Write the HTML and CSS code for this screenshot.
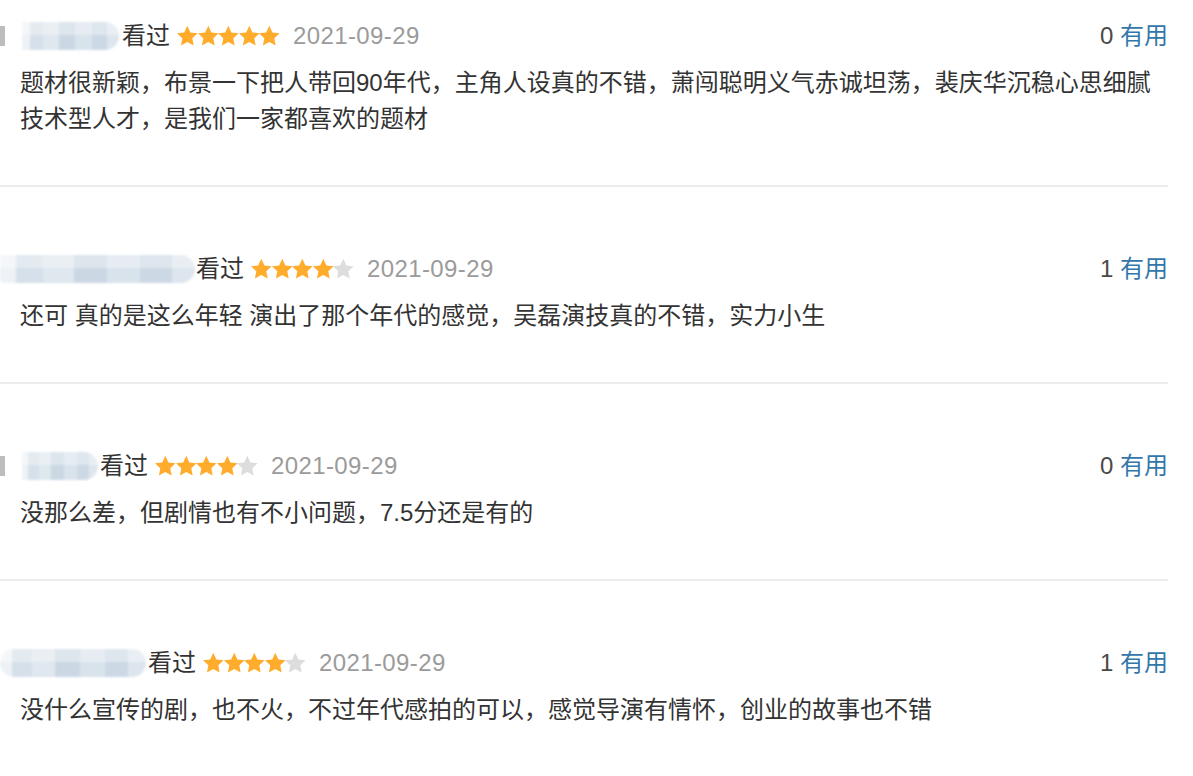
FILE: index.html
```html
<!DOCTYPE html>
<html lang="zh-CN">
<head>
<meta charset="utf-8">
<title>短评</title>
<link rel="stylesheet" href="styles.css">
</head>
<body>
<svg class="defs" width="0" height="0" aria-hidden="true">
  <symbol id="star" viewBox="0 0 20 20" overflow="visible">
    <polygon points="10,-0.2 13.1,6.4 20.3,7.3 15,12.3 16.35,19.45 10,15.95 3.65,19.45 5,12.3 -0.3,7.3 6.9,6.4"/>
  </symbol>
</svg>
<div class="comments">
  <div class="item">
    <div class="head">
      <div class="info">
        <span class="avatar-edge"></span>
        <span class="name-mask w1"></span>
        <span class="seen">看过</span>
        <span class="stars">
          <svg class="star on"><use href="#star"/></svg><svg class="star on"><use href="#star"/></svg><svg class="star on"><use href="#star"/></svg><svg class="star on"><use href="#star"/></svg><svg class="star on"><use href="#star"/></svg>
        </span>
        <span class="date">2021-09-29</span>
      </div>
      <div class="votes"><span class="count">0</span> <a class="useful">有用</a></div>
    </div>
    <p class="text">题材很新颖，布景一下把人带回90年代，主角人设真的不错，萧闯聪明义气赤诚坦荡，裴庆华沉稳心思细腻技术型人才，是我们一家都喜欢的题材</p>
  </div>

  <div class="item">
    <div class="head">
      <div class="info">
        <span class="name-mask w2"></span>
        <span class="seen">看过</span>
        <span class="stars">
          <svg class="star on"><use href="#star"/></svg><svg class="star on"><use href="#star"/></svg><svg class="star on"><use href="#star"/></svg><svg class="star on"><use href="#star"/></svg><svg class="star off"><use href="#star"/></svg>
        </span>
        <span class="date">2021-09-29</span>
      </div>
      <div class="votes"><span class="count">1</span> <a class="useful">有用</a></div>
    </div>
    <p class="text">还可 真的是这么年轻 演出了那个年代的感觉，吴磊演技真的不错，实力小生</p>
  </div>

  <div class="item">
    <div class="head">
      <div class="info">
        <span class="avatar-edge"></span>
        <span class="name-mask w3"></span>
        <span class="seen">看过</span>
        <span class="stars">
          <svg class="star on"><use href="#star"/></svg><svg class="star on"><use href="#star"/></svg><svg class="star on"><use href="#star"/></svg><svg class="star on"><use href="#star"/></svg><svg class="star off"><use href="#star"/></svg>
        </span>
        <span class="date">2021-09-29</span>
      </div>
      <div class="votes"><span class="count">0</span> <a class="useful">有用</a></div>
    </div>
    <p class="text">没那么差，但剧情也有不小问题，7.5分还是有的</p>
  </div>

  <div class="item">
    <div class="head">
      <div class="info">
        <span class="name-mask w4"></span>
        <span class="seen">看过</span>
        <span class="stars">
          <svg class="star on"><use href="#star"/></svg><svg class="star on"><use href="#star"/></svg><svg class="star on"><use href="#star"/></svg><svg class="star on"><use href="#star"/></svg><svg class="star off"><use href="#star"/></svg>
        </span>
        <span class="date">2021-09-29</span>
      </div>
      <div class="votes"><span class="count">1</span> <a class="useful">有用</a></div>
    </div>
    <p class="text">没什么宣传的剧，也不火，不过年代感拍的可以，感觉导演有情怀，创业的故事也不错</p>
  </div>
</div>
</body>
</html>
```

FILE: styles.css
```css
html, body {
  margin: 0;
  padding: 0;
  background: #fff;
}

body {
  font-family: "Liberation Sans", "Noto Sans CJK SC", sans-serif;
  font-size: 24px;
  color: #333;
  overflow: hidden;
}

.defs {
  position: absolute;
  width: 0;
  height: 0;
  overflow: hidden;
}

.comments {
  width: 1168px;
}

.item {
  padding: 64px 0 48px;
  border-bottom: 2px solid #ececec;
}

.item:first-child {
  padding-top: 18px;
}

.head {
  display: flex;
  justify-content: space-between;
  align-items: center;
  height: 36px;
  line-height: 36px;
}

.info {
  display: flex;
  align-items: center;
}

.avatar-edge {
  width: 5px;
  height: 20px;
  background: #bdbdbd;
  margin-right: 17px;
}

.name-mask {
  display: block;
  height: 28px;
  border-radius: 0 14px 14px 0;
  background:
    linear-gradient(180deg, rgba(255,255,255,0.35) 0 45%, rgba(255,255,255,0) 45% 100%),
    linear-gradient(90deg,
      #eef2f6 0 8%, #d5e0ea 8% 22%, #dfe7ef 22% 38%, #cbd8e4 38% 55%,
      #d9e3ec 55% 72%, #ccd9e5 72% 88%, #dde6ee 88% 100%);
  filter: blur(1.2px);
}

.name-mask.w1 { width: 97px; margin-right: 3px; }
.name-mask.w2 { width: 195px; margin-right: 1px; border-radius: 4px 14px 14px 4px; }
.name-mask.w3 { width: 76px; margin-right: 2px; }
.name-mask.w4 { width: 146px; margin-right: 2px; border-radius: 14px; }

.seen {
  color: #333;
}

.stars {
  display: flex;
  align-items: center;
  margin-left: 7px;
  margin-right: 13px;
}

.star {
  width: 20.6px;
  height: 20px;
  display: block;
  overflow: visible;
}

.star.on { fill: #ffac2d; }
.star.off { fill: #dddddd; }

.date {
  color: #9b9b9b;
  letter-spacing: 0.4px;
}

.votes {
  color: #494949;
  white-space: pre;
}

.useful {
  color: #3377aa;
  text-decoration: none;
}

.text {
  margin: 11px 0 0 20px;
  line-height: 36px;
  color: #333;
}
```
